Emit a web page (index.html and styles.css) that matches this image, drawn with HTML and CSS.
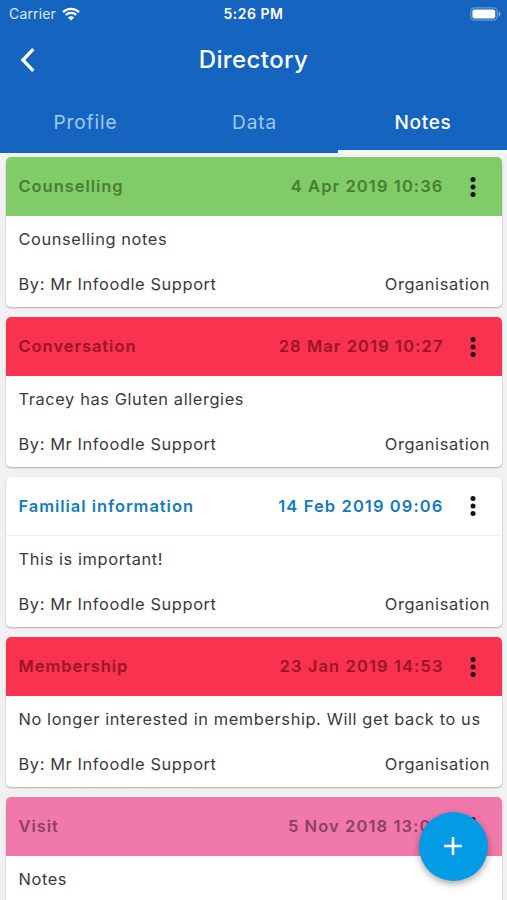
FILE: index.html
```html
<!DOCTYPE html>
<html lang="en">
<head>
  <meta charset="UTF-8">
  <meta name="viewport" content="width=device-width, initial-scale=1.0">
  <title>Directory</title>
  <link rel="stylesheet" href="styles.css">
</head>
<body>
  <header class="app-header">
    <div class="status-bar">
      <div class="carrier">
        <span>Carrier</span>
        <svg class="wifi" width="18" height="14" viewBox="0 0 18 14">
          <path d="M1 5.1a11.4 11.4 0 0 1 16 0M3.8 8a7.4 7.4 0 0 1 10.4 0" fill="none" stroke="#fff" stroke-width="2.3"/>
          <path d="M9 13.6 5.9 10.5a4.4 4.4 0 0 1 6.2 0z" fill="#fff"/>
        </svg>
      </div>
      <div class="clock">5:26 PM</div>
      <div class="battery">
        <svg width="31" height="14" viewBox="0 0 31 14">
          <rect x=".8" y=".8" width="26.4" height="12.4" rx="3.6" fill="none" stroke="#fff" stroke-opacity=".35" stroke-width="1.2"/>
          <rect x="2.4" y="2.4" width="22.8" height="9.2" rx="2" fill="#fff"/>
          <path d="M28.6 4.6v4.8c1-.4 1.7-1.3 1.7-2.4s-.7-2-1.7-2.4z" fill="#fff" fill-opacity=".5"/>
        </svg>
      </div>
    </div>

    <div class="title-bar">
      <button class="back-button" aria-label="Back">
        <svg width="16" height="26" viewBox="0 0 16 26">
          <path d="M13.3 2.2 2.9 13l10.4 10.8" fill="none" stroke="#fff" stroke-width="3.3"/>
        </svg>
      </button>
      <h1 class="title">Directory</h1>
    </div>

    <nav class="tabs">
      <a class="tab">Profile</a>
      <a class="tab">Data</a>
      <a class="tab active">Notes</a>
    </nav>
  </header>

  <main class="notes">
    <div class="note">
      <div class="note-header green">
        <span class="note-type">Counselling</span>
        <span class="note-date">4 Apr 2019 10:36</span>
        <svg class="more" width="6" height="20" viewBox="0 0 6 20"><circle cx="3" cy="2.6" r="2.5"/><circle cx="3" cy="10" r="2.5"/><circle cx="3" cy="17.4" r="2.5"/></svg>
      </div>
      <div class="note-text">Counselling notes</div>
      <div class="note-footer"><span>By: Mr Infoodle Support</span><span>Organisation</span></div>
    </div>

    <div class="note">
      <div class="note-header red">
        <span class="note-type">Conversation</span>
        <span class="note-date">28 Mar 2019 10:27</span>
        <svg class="more" width="6" height="20" viewBox="0 0 6 20"><circle cx="3" cy="2.6" r="2.5"/><circle cx="3" cy="10" r="2.5"/><circle cx="3" cy="17.4" r="2.5"/></svg>
      </div>
      <div class="note-text">Tracey has Gluten allergies</div>
      <div class="note-footer"><span>By: Mr Infoodle Support</span><span>Organisation</span></div>
    </div>

    <div class="note">
      <div class="note-header plain">
        <span class="note-type">Familial information</span>
        <span class="note-date">14 Feb 2019 09:06</span>
        <svg class="more" width="6" height="20" viewBox="0 0 6 20"><circle cx="3" cy="2.6" r="2.5"/><circle cx="3" cy="10" r="2.5"/><circle cx="3" cy="17.4" r="2.5"/></svg>
      </div>
      <div class="note-text">This is important!</div>
      <div class="note-footer"><span>By: Mr Infoodle Support</span><span>Organisation</span></div>
    </div>

    <div class="note">
      <div class="note-header red">
        <span class="note-type">Membership</span>
        <span class="note-date">23 Jan 2019 14:53</span>
        <svg class="more" width="6" height="20" viewBox="0 0 6 20"><circle cx="3" cy="2.6" r="2.5"/><circle cx="3" cy="10" r="2.5"/><circle cx="3" cy="17.4" r="2.5"/></svg>
      </div>
      <div class="note-text">No longer interested in membership. Will get back to us</div>
      <div class="note-footer"><span>By: Mr Infoodle Support</span><span>Organisation</span></div>
    </div>

    <div class="note last">
      <div class="note-header pink">
        <span class="note-type">Visit</span>
        <span class="note-date">5 Nov 2018 13:00</span>
        <svg class="more" width="6" height="20" viewBox="0 0 6 20"><circle cx="3" cy="2.6" r="2.5"/><circle cx="3" cy="10" r="2.5"/><circle cx="3" cy="17.4" r="2.5"/></svg>
      </div>
      <div class="note-text">Notes</div>
    </div>
  </main>

  <button class="add-button" aria-label="Add note">
    <svg width="18" height="18" viewBox="0 0 18 18">
      <path d="M9 0v18M0 9h18" stroke="#fff" stroke-width="2.5"/>
    </svg>
  </button>
</body>
</html>
```
FILE: styles.css
```css
* {
  box-sizing: border-box;
}
body {
  margin: 0;
  height: 900px;
  overflow: hidden;
  background-color: #f1f1f2;
  color: #3a3a3a;
  font-family: Inter, "Liberation Sans", sans-serif;
  font-size: 16.4px;
}
button {
  padding: 0;
  border: none;
  background: none;
}
svg {
  display: block;
}
.app-header {
  height: 153px;
  background-color: #1565c0;
  color: white;
}
.status-bar {
  display: grid;
  grid-template-columns: 1fr auto 1fr;
  align-items: center;
  height: 27px;
  padding: 0 6px 0 9px;
}
.carrier {
  display: flex;
  gap: 6px;
  align-items: center;
  font-size: 14px;
  letter-spacing: 0.15px;
  color: #dceaf9;
}
.clock {
  margin-right: 3px;
  font-size: 14px;
  font-weight: 600;
  letter-spacing: 0.5px;
}
.battery {
  justify-self: end;
}
.title-bar {
  display: grid;
  grid-template-columns: 60px 1fr 60px;
  align-items: center;
  height: 65px;
}
.back-button {
  margin-left: 20px;
  width: 16px;
}
.title {
  margin: 0;
  font-size: 24px;
  font-weight: 500;
  letter-spacing: 0.4px;
  text-align: center;
}
.tabs {
  display: grid;
  grid-template-columns: repeat(3, 1fr);
  height: 61px;
}
.tab {
  padding: 4px 0 0 2px;
  border-bottom: 3px solid transparent;
  line-height: 54px;
  font-size: 19px;
  letter-spacing: 0.9px;
  text-align: center;
  color: #a1c9f4;
}
.tab.active {
  padding-left: 1px;
  border-color: #f4f8fc;
  color: white;
  font-weight: 500;
  letter-spacing: 0.7px;
}
.notes {
  display: flex;
  flex-direction: column;
  gap: 10px;
  height: 747px;
  overflow: hidden;
  padding: 4px 5px 0 6px;
}
.note {
  height: 150px;
  flex-shrink: 0;
  border-radius: 5px;
  background-color: white;
  box-shadow: 0 1px 2px rgba(0, 0, 0, 0.28);
}
/* runs off the bottom of the screen */
.note.last {
  height: 103px;
  border-radius: 5px 5px 0 0;
}
.note-header {
  display: flex;
  align-items: center;
  height: 59px;
  padding: 0 26px 0 12.5px;
  border-radius: 5px 5px 0 0;
  font-size: 16.5px;
  font-weight: 600;
  line-height: 20px;
  letter-spacing: 0.95px;
}
.note-type,
.note-date {
  padding-bottom: 1px;
}
.note-date {
  margin-left: auto;
  letter-spacing: 1.1px;
}
.more {
  margin-left: 26.5px;
  fill: #111;
}
.green {
  background-color: #81cb69;
  color: #47802f;
}
.red {
  background-color: #f8324f;
  color: #9a1624;
}
.plain {
  border-bottom: 1px solid #f0f0f0;
  color: #137bbd;
}
.pink {
  background-color: #f178aa;
  color: #8e4065;
}
.note-text,
.note-footer {
  padding: 0 12px 0 12.5px;
  line-height: 45px;
  letter-spacing: 0.6px;
  white-space: nowrap;
}
.note-text {
  padding-top: 1px;
}
.note-footer {
  display: flex;
  justify-content: space-between;
}
.add-button {
  position: fixed;
  right: 19px;
  bottom: 19px;
  display: flex;
  align-items: center;
  justify-content: center;
  width: 69px;
  height: 69px;
  border-radius: 50%;
  background-color: #039be5;
  box-shadow: 0 3px 7px rgba(0, 0, 0, 0.35);
}
.add-button svg {
  margin: 0 1px 1px 0;
}
```
